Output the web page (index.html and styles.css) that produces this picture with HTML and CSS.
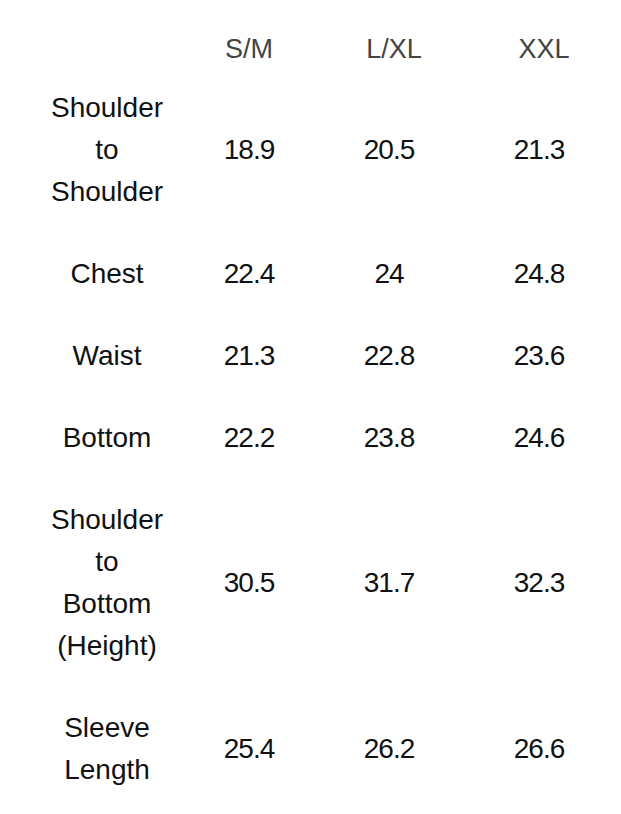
FILE: index.html
```html
<!DOCTYPE html>
<html>
<head>
<meta charset="utf-8">
<link rel="stylesheet" href="styles.css">
</head>
<body>
<table class="size-table">
  <colgroup>
    <col class="c-label">
    <col class="c-sm">
    <col class="c-lxl">
    <col class="c-xxl">
  </colgroup>
  <thead>
    <tr>
      <th></th>
      <th>S/M</th>
      <th class="shift">L/XL</th>
      <th class="shift">XXL</th>
    </tr>
  </thead>
  <tbody>
    <tr><td>Shoulder<br>to<br>Shoulder</td><td class="num">18.9</td><td class="num">20.5</td><td class="num">21.3</td></tr>
    <tr><td>Chest</td><td class="num">22.4</td><td class="num">24</td><td class="num">24.8</td></tr>
    <tr><td>Waist</td><td class="num">21.3</td><td class="num">22.8</td><td class="num">23.6</td></tr>
    <tr><td>Bottom</td><td class="num">22.2</td><td class="num">23.8</td><td class="num">24.6</td></tr>
    <tr><td>Shoulder<br>to<br>Bottom<br>(Height)</td><td class="num">30.5</td><td class="num">31.7</td><td class="num">32.3</td></tr>
    <tr><td>Sleeve<br>Length</td><td class="num">25.4</td><td class="num">26.2</td><td class="num">26.6</td></tr>
  </tbody>
</table>
</body>
</html>
```
FILE: styles.css
```css
html, body {
  margin: 0;
  padding: 0;
  background: #ffffff;
}
body {
  padding: 32px 0 0 8px;
  font-family: "Liberation Sans", Arial, sans-serif;
}
.size-table {
  border-collapse: collapse;
  border-spacing: 0;
  table-layout: fixed;
  width: 584px;
}
.c-label { width: 198px; }
.c-sm { width: 86px; }
.c-lxl { width: 194px; }
.c-xxl { width: 106px; }

.size-table th {
  height: 34px;
  padding: 0;
  font-weight: 400;
  font-size: 27px;
  line-height: 34px;
  color: #444444;
  text-align: center;
  vertical-align: middle;
}
.size-table th.shift {
  padding-left: 10px;
}
.size-table td {
  padding: 21px 0 19px;
  font-size: 28px;
  line-height: 42px;
  color: #111111;
  text-align: center;
  vertical-align: middle;
}
.size-table td.num {
  letter-spacing: -1px;
}
```
